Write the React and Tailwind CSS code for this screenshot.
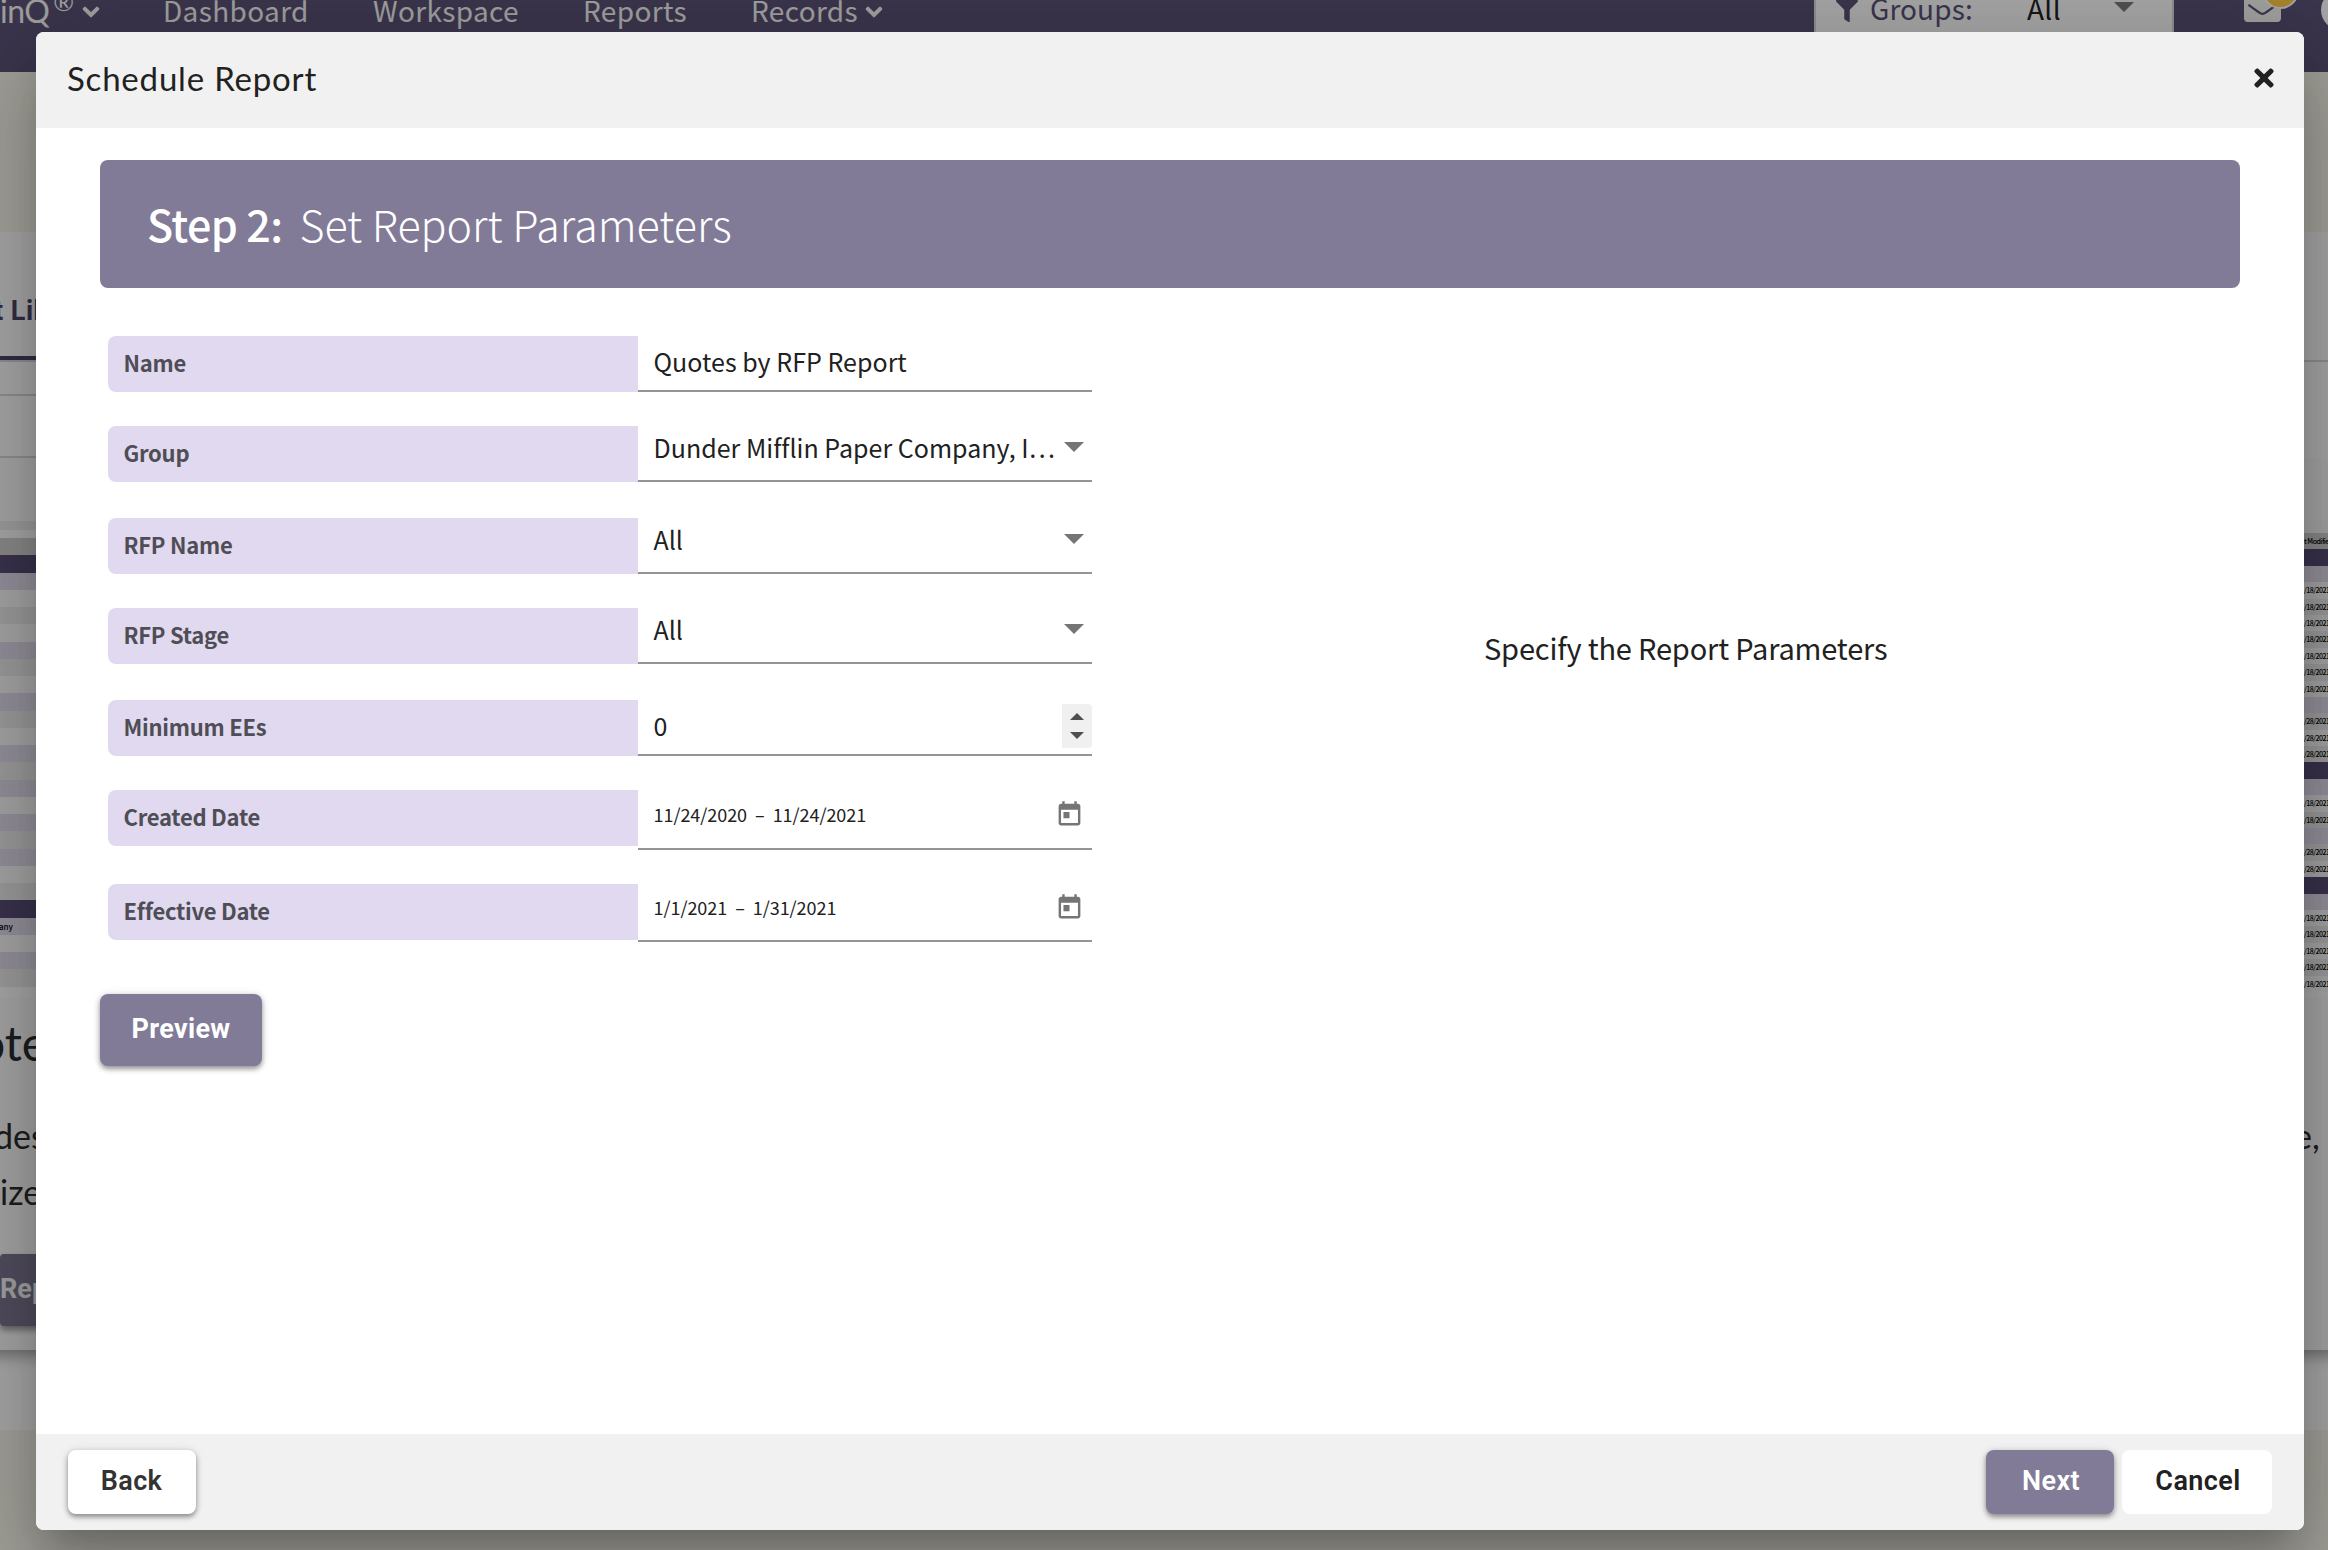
import { FaChevronDown, FaFilter, FaTimes, FaEnvelopeOpen } from 'react-icons/fa'

const SANS = "font-['Noto_Sans_CJK_JP',sans-serif]"
const DISPLAY = "font-['Lato',sans-serif]"
const BUTTON = "font-['Roboto',sans-serif]"

const FIELDS = [
  { label: 'Name', type: 'text', value: 'Quotes by RFP Report', row: 'mt-0 h-[56px]', text: 'h-[52px]' },
  { label: 'Group', type: 'select', value: 'Dunder Mifflin Paper Company, I…', row: 'mt-[34px] h-[56px]', text: 'h-[44px]' },
  { label: 'RFP Name', type: 'select', value: 'All', row: 'mt-[36px] h-[56px]', text: 'h-[44px]' },
  { label: 'RFP Stage', type: 'select', value: 'All', row: 'mt-[34px] h-[56px]', text: 'h-[44px]' },
  { label: 'Minimum EEs', type: 'number', value: '0', row: 'mt-[36px] h-[56px]', text: 'h-[52px]' },
  { label: 'Created Date', type: 'range', value: ['11/24/2020', '11/24/2021'], row: 'mt-[34px] h-[60px]', text: 'h-[48px]' },
  { label: 'Effective Date', type: 'range', value: ['1/1/2021', '1/31/2021'], row: 'mt-[34px] h-[58px]', text: 'h-[46px]' },
]

const STRIPES = {
  lav: 'bg-[#d9d3e3]',
  light: 'bg-[#f0f0f0]',
  gray: 'bg-[#e2e2e2]',
  head: 'bg-[#c8c8c8]',
  navy: 'bg-[#544b70]',
}

const LEFT_ROWS = [
  'head', 'navy', 'lav', 'light', 'gray', 'light', 'lav', 'gray', 'light', 'lav', 'gray', 'light', 'lav',
  'gray', 'lav', 'light', 'lav', 'gray', 'lav', 'light', 'gray', 'navy', 'lav', 'light', 'lav', 'gray',
]

const RIGHT_ROWS = [
  ['head', 't Modifie'], ['navy'], ['lav'],
  ['light', '/18/2021'], ['gray', '/18/2021'], ['light', '/18/2021'], ['gray', '/18/2021'],
  ['light', '/18/2021'], ['gray', '/18/2021'], ['light', '/18/2021'],
  ['lav'], ['gray', '/28/2021'], ['light', '/28/2021'], ['gray', '/28/2021'],
  ['navy'], ['lav'], ['light', '/18/2021'], ['gray', '/18/2021'],
  ['lav'], ['gray', '/28/2021'], ['light', '/28/2021'],
  ['navy'], ['lav'],
  ['light', '/18/2021'], ['gray', '/18/2021'], ['light', '/18/2021'], ['gray', '/18/2021'], ['light', '/18/2021'],
]

function Caret({ className }) {
  return (
    <svg viewBox="0 0 20 10" className={className} fill="currentColor">
      <path d="M0 0h20L10 10z" />
    </svg>
  )
}

function CalendarIcon() {
  return (
    <svg viewBox="0 0 24 24" className="w-[29px] h-[29px] text-[#757575]" fill="currentColor">
      <path d="M19 3h-1V1h-2v2H8V1H6v2H5c-1.11 0-1.99.9-1.99 2L3 19c0 1.1.89 2 2 2h14c1.1 0 2-.9 2-2V5c0-1.1-.9-2-2-2zm0 16H5V8h14v11zM7 10h5v5H7z" />
    </svg>
  )
}

function Field({ field }) {
  return (
    <div className={`flex items-start ${field.row}`}>
      <div className="w-[530px] h-[56px] pl-[15.5px] pb-[3px] flex items-center rounded-l-lg bg-[#e0d9ef] text-[22px] tracking-[-0.25px] font-bold text-[#4f4d55]">
        {field.label}
      </div>
      <div className="w-[454px] h-full border-b-2 border-[#949494] pl-[15.5px] text-[#212121]">
        <div className={`flex items-center justify-between ${field.text}`}>
          {field.type === 'range' ? (
            <div className="flex items-center gap-[8px] text-[18px] tracking-[-0.05px]">
              <span>{field.value[0]}</span>
              <span>–</span>
              <span>{field.value[1]}</span>
            </div>
          ) : (
            <span className="text-[25px] tracking-[0.02px] whitespace-nowrap">{field.value}</span>
          )}
          {field.type === 'select' && <Caret className="w-[20px] h-[10px] mr-2 mb-[2px] text-[#757575]" />}
          {field.type === 'range' && <div className="mr-2"><CalendarIcon /></div>}
          {field.type === 'number' && (
            <div className="w-[30px] h-[44px] rounded-r-sm bg-[#f0f0f0] flex flex-col items-center justify-center gap-[12px] text-[#4f4f4f]">
              <Caret className="w-[14px] h-[7px] rotate-180" />
              <Caret className="w-[14px] h-[7px]" />
            </div>
          )}
        </div>
      </div>
    </div>
  )
}

function NavBar() {
  return (
    <div className={`h-[72px] bg-[#574e72] text-[#e9e9e6] text-[28px] leading-[40px] tracking-[0.35px] flex items-start overflow-hidden ${SANS}`}>
      <div className={`w-[163px] flex items-start ${DISPLAY}`}>
        <span className="text-[32px] leading-[22px] tracking-[-0.5px]">inQ</span>
        <span className="text-[25px] leading-[2px] ml-[4px]">®</span>
        <FaChevronDown className="w-[18px] h-[18px] mt-[3px] ml-[8px] stroke-current stroke-[36]" />
      </div>
      <div className="flex items-start -mt-[10px]">
        <span className="w-[210px]">Dashboard</span>
        <span className="w-[210px]">Workspace</span>
        <span className="w-[168px]">Reports</span>
        <span className="w-[114px]">Records</span>
        <FaChevronDown className="w-[18px] h-[18px] mt-[13px] stroke-current stroke-[36]" />
      </div>
      <div className="ml-auto w-[360px] h-[72px] bg-[#f2f2f2] border-x-2 border-[#d0d0d0] pl-[20px] flex items-start">
        <FaFilter className="w-[22px] h-[26px] -mt-[2px] text-[#574e72]" />
        <span className="ml-3 -mt-3 w-[157px] tracking-[0.1px] text-[#574e72]">Groups:</span>
        <span className="-mt-3 w-[87px] text-[#212121]">All</span>
        <Caret className="w-[20px] h-[10px] mt-[2px] text-[#757575]" />
      </div>
      <div className="w-[154px] pl-[70px] flex items-start">
        <div className="relative">
          <FaEnvelopeOpen className="w-[37px] h-[37px] -mt-[15px]" />
          <span className="absolute left-[18px] -top-[28px] w-[37px] h-[37px] rounded-full border-2 border-[#f2f2f2] bg-[#f5c343]" />
        </div>
        <span className="ml-[40px] -mt-[10px] w-[40px] h-[40px] shrink-0 rounded-full bg-[#f2f2f2]" />
      </div>
    </div>
  )
}

function BackgroundPage() {
  return (
    <div className="w-full h-full overflow-hidden bg-[#ecebe0]">
      <NavBar />
      <div className="h-[160px]" />
      <div className="h-[1198px] bg-[#f4f4f5]">
        <div className="h-[124px] pt-[59px] overflow-hidden">
          <div className={`text-[27px] leading-[40px] tracking-[0.5px] font-bold text-[#4b4266] whitespace-pre ${BUTTON}`}>
            <div className="-ml-[6px]">t Library</div>
          </div>
        </div>
        <div className="h-[4px] w-[200px] bg-[#4b4266]" />
        <div className="h-[2px] bg-[#cfcfcf]" />
        <div className="w-[200px] h-[34px] border-b-2 border-[#cfcfcf]" />
        <div className="w-[200px] h-[62px] border-b-2 border-[#cfcfcf]" />
        <div className="h-[892px] -mx-10 px-10 bg-[#f1f1f1] shadow-[0_16px_14px_-10px_rgba(0,0,0,0.35)]">
          <div className="h-[540px] flex justify-between">
            <div className={`w-[36px] pt-[63px] overflow-hidden ${SANS}`}>
              <div className="h-[9px] bg-[#e4e4e4]" />
              <div className="h-[8px] bg-[#f4f4f4]" />
              {LEFT_ROWS.map((tone, i) => (
                <div key={i} className={`h-[17.25px] text-[8px] leading-[17px] font-medium overflow-hidden whitespace-nowrap text-black ${STRIPES[tone]}`}>
                  {i === 22 && <div className="-ml-[6px]">pany</div>}
                </div>
              ))}
              <div className="h-[11px] bg-[#f4f4f4]" />
            </div>
            <div className={`w-[24px] pt-[63px] overflow-hidden ${SANS}`}>
              <div className="h-[12px] bg-[#efefef]" />
              {RIGHT_ROWS.map(([tone, text], i) => (
                <div key={i} className={`h-[16.4px] text-[7px] leading-[16px] tracking-[-0.5px] font-medium overflow-hidden whitespace-nowrap text-black ${STRIPES[tone]}`}>
                  {text}
                </div>
              ))}
              <div className="h-[6px] bg-[#f4f4f4]" />
            </div>
          </div>
          <div className={`flex justify-between text-[#2b2b2b] ${DISPLAY}`}>
            <div className="w-[36px] overflow-hidden whitespace-nowrap">
              <div className="-ml-[22px] text-[48px] leading-[60px] mt-[15px]">otes</div>
              <div className="-ml-[6px] text-[34px] leading-[56px] mt-[35px]">des</div>
              <div className="text-[34px] leading-[56px]">izes</div>
            </div>
            <div className="w-[28px] text-[34px] leading-[56px] mt-[110px]">
              <div className="-ml-[6px]">e,</div>
            </div>
          </div>
          <div className={`mt-[34px] w-[200px] h-[72px] rounded bg-[#767089] text-[#ebebeb] text-[27px] leading-[70px] font-bold shadow-[0_4px_6px_rgba(0,0,0,0.4)] ${BUTTON}`}>
            Report
          </div>
        </div>
      </div>
    </div>
  )
}

export default function App() {
  return (
    <div className={`relative w-[2328px] h-[1550px] overflow-hidden ${SANS}`}>
      <BackgroundPage />
      <div className="absolute inset-0 bg-black/32" />
      <div className="absolute left-[36px] top-[32px] w-[2268px] h-[1498px] flex flex-col rounded-lg overflow-hidden bg-white shadow-[0_22px_30px_-14px_rgba(0,0,0,0.2),0_48px_76px_6px_rgba(0,0,0,0.14),0_18px_92px_16px_rgba(0,0,0,0.12)]">
        <div className="h-[96px] shrink-0 pl-[31px] pr-[28px] pb-[3px] flex items-center justify-between bg-[#f1f1f1] text-[#212121]">
          <span className={`text-[33px] tracking-[0.8px] ${DISPLAY}`}>Schedule Report</span>
          <FaTimes className="w-[24px] h-[28px] -mt-0.5" />
        </div>

        <div className="flex-1 px-[64px] pt-[32px]">
          <div className="h-[128px] pl-[47px] pb-[2px] flex items-center rounded-lg bg-[#817b98] text-white text-[43px]">
            <span className="font-medium tracking-[-0.6px]">Step 2:</span>
            <span className="ml-[17px] font-light">Set Report Parameters</span>
          </div>
          <div className="flex">
            <div className="w-[1000px] pt-[48px] pl-[8px]">
              {FIELDS.map(f => <Field key={f.label} field={f} />)}
            </div>
            <div className="flex-1 pt-[337px] pl-[384px] text-[29px] leading-[44px] tracking-[-0.18px] text-[#212121]">
              Specify the Report Parameters
            </div>
          </div>
          <button className={`mt-[52px] w-[162px] h-[72px] pb-px rounded-lg bg-[#817b98] text-white text-[27px] tracking-[0.3px] font-bold shadow-[0_3px_5px_rgba(0,0,0,0.35),0_1px_8px_rgba(0,0,0,0.15)] ${BUTTON}`}>
            Preview
          </button>
        </div>

        <div className={`h-[96px] shrink-0 px-[32px] flex items-center bg-[#f1f1f1] text-[27px] tracking-[0.4px] font-semibold ${BUTTON}`}>
          <button className="w-[128px] h-[64px] pb-px pr-px rounded-lg bg-white text-[#333] shadow-[0_3px_5px_rgba(0,0,0,0.35),0_1px_8px_rgba(0,0,0,0.15)]">Back</button>
          <button className="ml-auto w-[128px] h-[64px] pb-px pl-0.5 rounded-lg bg-[#817b98] text-white shadow-[0_3px_5px_rgba(0,0,0,0.35),0_1px_8px_rgba(0,0,0,0.15)]">Next</button>
          <button className="ml-2 w-[150px] h-[64px] pb-px pl-0.5 rounded-lg bg-white text-[#212121]">Cancel</button>
        </div>
      </div>
    </div>
  )
}
